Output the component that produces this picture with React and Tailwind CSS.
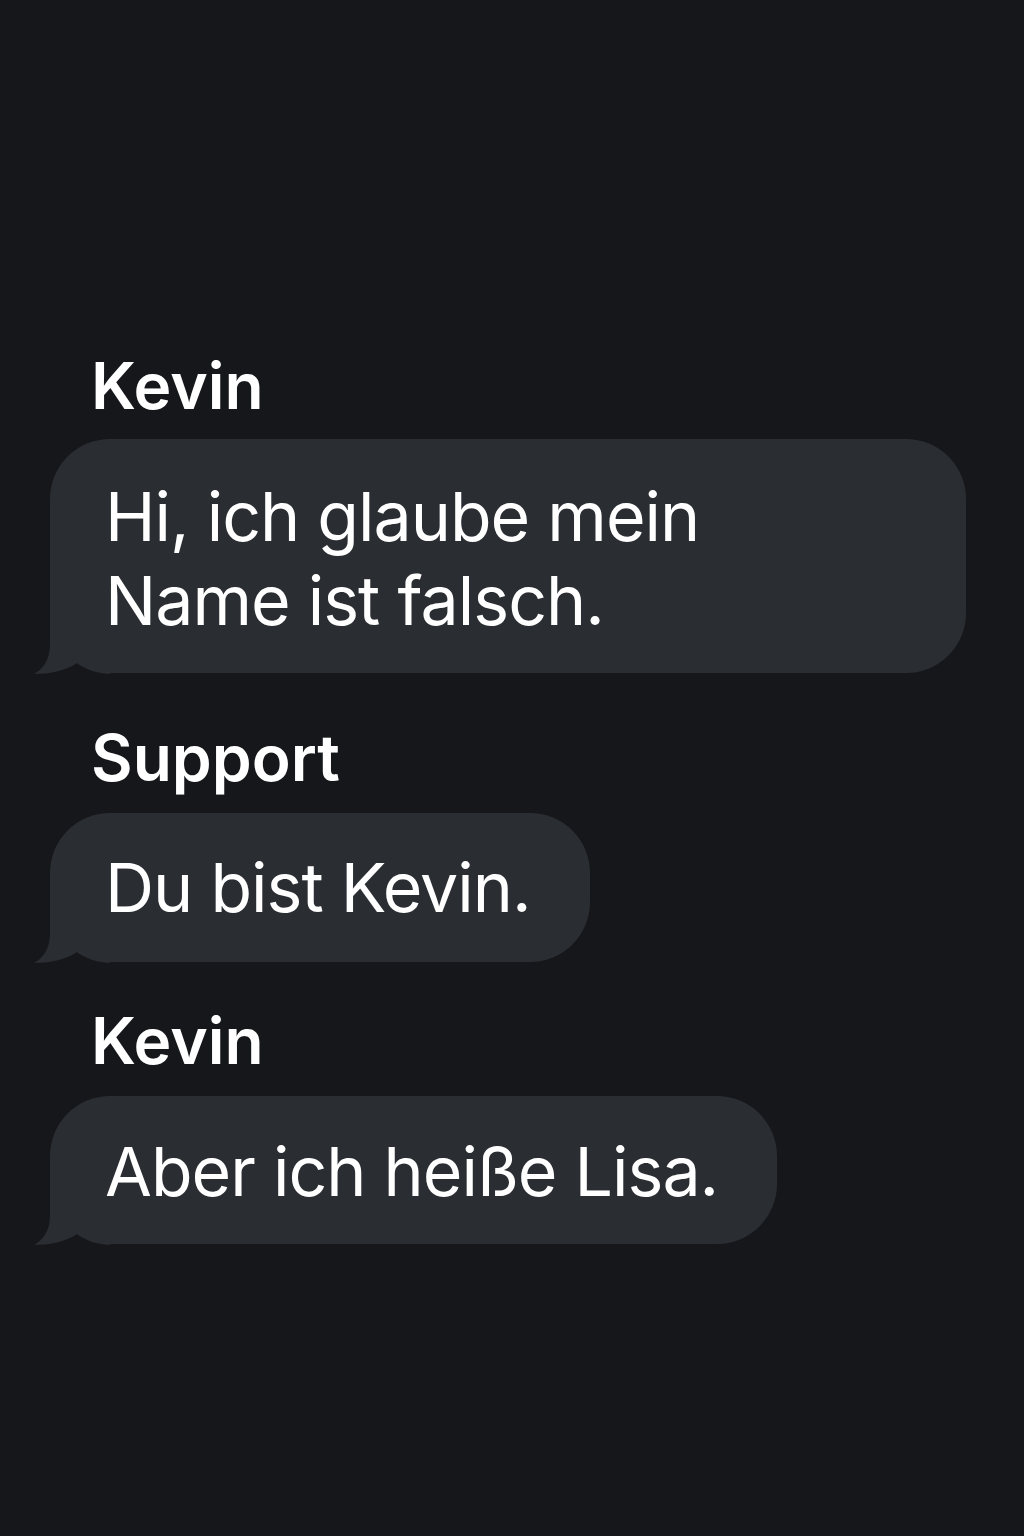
const BUBBLE = '#2a2d31';

const Tail = () => (
  <svg
    className="absolute bottom-[-1px] left-[-16px]"
    width="76"
    height="61"
    viewBox="0 0 76 61"
  >
    <path
      d="M16 0 L16 31 C16 47 9 56 0 61 C14 61 32 58 43 50 C51 56 61 60 76 61 L76 0 Z"
      fill={BUBBLE}
    />
  </svg>
);

const Label = ({ children, className = '' }) => (
  <div className={`ml-[41px] h-[64px] text-[64px] font-semibold leading-[64px] text-white ${className}`}>
    {children}
  </div>
);

const Bubble = ({ children, className = '' }) => (
  <div className={`relative rounded-[60px] bg-[#2a2d31] pl-[55px] text-[68px] leading-[84px] tracking-[-1px] text-white ${className}`}>
    <Tail />
    <p className="relative">{children}</p>
  </div>
);

export default function App() {
  return (
    <div
      className="flex min-h-[1536px] w-full flex-col bg-[#16171b] pl-[50px] pt-[354px]"
      style={{ fontFamily: 'Inter, "Noto Sans", sans-serif' }}
    >
      <Label className="mb-[21px]">Kevin</Label>
      <Bubble className="w-[916px] pb-[31px] pt-[35px]">
        Hi, ich glaube mein
        <br />
        Name ist falsch.
      </Bubble>

      <Label className="mb-[23px] mt-[53px]">Support</Label>
      <Bubble className="w-[540px] pb-[33px] pt-[32px]">Du bist Kevin.</Bubble>

      <Label className="mb-[23px] mt-[47px]">Kevin</Label>
      <Bubble className="w-[727px] pb-[31px] pt-[33px]">Aber ich heiße Lisa.</Bubble>
    </div>
  );
}
